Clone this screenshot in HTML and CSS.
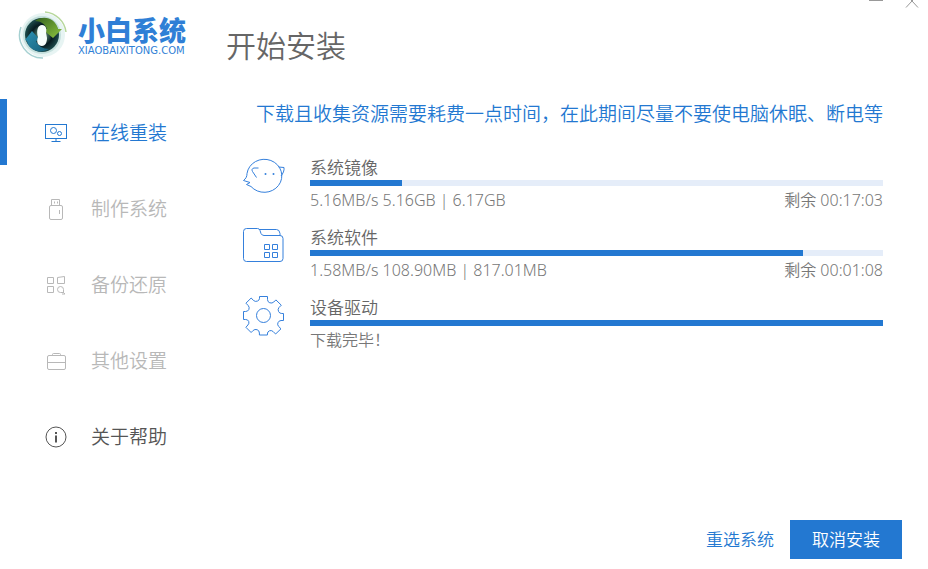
FILE: index.html
```html
<!DOCTYPE html>
<html lang="zh-CN">
<head>
<meta charset="utf-8">
<meta name="viewport" content="width=device-width, initial-scale=1">
<title>小白系统</title>
<link rel="stylesheet" href="styles.css">
</head>
<body>
<div class="window">
  <div class="window-controls">
    <button type="button" aria-label="最小化"><svg width="16" height="10" viewBox="0 0 16 10"><path d="M1 .5h14"/></svg></button>
    <button type="button" aria-label="关闭"><svg width="16" height="10" viewBox="0 0 16 10"><path d="M2 -5 8 1l6-6M2 7.5 8 1l6 6.5"/></svg></button>
  </div>
  <aside class="sidebar">
    <div class="brand">
      <svg class="brand-mark" width="50" height="50" viewBox="0 0 50 50" aria-hidden="true">
        <defs>
          <radialGradient id="disc"><stop offset="0" stop-color="#f4fffb"/><stop offset=".3" stop-color="#436b5c"/><stop offset=".6" stop-color="#061b20"/><stop offset="1" stop-color="#1d4b4c"/></radialGradient>
          <linearGradient id="leaf" x2="1" y2="1"><stop stop-color="#35631f"/><stop offset="1" stop-color="#8dc63f"/></linearGradient>
          <linearGradient id="sea" x2="1" y2="1"><stop stop-color="#2c92b4"/><stop offset="1" stop-color="#176079"/></linearGradient>
        </defs>
        <circle cx="25" cy="25" r="22" fill="#e7f4f3"/>
        <path d="M27 2A23 23 0 0 1 48 22" fill="none" stroke="#b6d79b" stroke-width="1.5"/>
        <path d="M3 17A23 23 0 0 0 25 48" fill="none" stroke="#a5d0d1" stroke-width="1.5"/>
        <circle cx="24" cy="25" r="19" fill="#c4dfdc"/>
        <circle cx="24" cy="25" r="17" fill="url(#disc)"/>
        <path d="M17 11C26 4 38 9 40 19l4 0-9 9-11-9 5 0c-2-5-6-8-12-8z" fill="url(#leaf)"/>
        <path d="M31 39C21 45 10 39 9 31l-2-1 7-9 8 9-4 1c2 5 7 8 13 8z" fill="url(#sea)"/>
        <path d="M24 15c4 0 5 4 4 8l1 5c0 5-2 8-5 8-4 0-6-4-4-9-2-7 0-12 4-12z" fill="#f7fffc"/>
      </svg>
      <div class="brand-text">
        <span class="brand-name">小白系统</span>
        <span class="brand-domain">XIAOBAIXITONG.COM</span>
      </div>
    </div>
    <nav class="menu">
      <a class="menu-item is-active" href="#reinstall" aria-current="page">
        <svg width="22" height="22" viewBox="0 0 22 22" aria-hidden="true"><rect x=".5" y="2.5" width="21" height="14"/><circle cx="8.500" cy="8.500" r="3"/><circle cx="14.500" cy="11.500" r="2"/><path d="M11 17v3M6.500 19.500h9"/></svg>
        <span>在线重装</span></a>
      <a class="menu-item is-muted" href="#create">
        <svg width="22" height="22" viewBox="0 0 22 22" aria-hidden="true"><path d="M6.500 7.500v-6h8v6M9.500 3.500v2M12.500 3.500v2"/><rect x="4.500" y="7.500" width="13" height="14" rx="1.500"/><path d="M14.500 12v4"/></svg>
        <span>制作系统</span></a>
      <a class="menu-item is-muted" href="#backup">
        <svg width="22" height="22" viewBox="0 0 22 22" aria-hidden="true"><path d="M2.500 3.500h6v6h-6zM12.500 3.500l7-1v7h-7zM2.500 12.500h6v6h-6zM18.500 18.500v-3a3 3 0 1 0-3 3zM18 18l2 2h-3"/></svg>
        <span>备份还原</span></a>
      <a class="menu-item is-muted" href="#settings">
        <svg width="22" height="22" viewBox="0 0 22 22" aria-hidden="true"><rect x="2.500" y="5.500" width="18" height="14" rx="1.500"/><path d="M7.500 5.500v-1q0-1 1-1h6q1 0 1 1v1M2.500 12.500h18"/></svg>
        <span>其他设置</span></a>
      <a class="menu-item" href="#help">
        <svg width="22" height="22" viewBox="0 0 22 22" aria-hidden="true"><circle cx="11" cy="11" r="10"/><path class="bold" d="M11 9.500v7M11 6v2"/></svg>
        <span>关于帮助</span></a>
    </nav>
  </aside>
  <main class="content">
    <h1>开始安装</h1>
    <p class="notice">下载且收集资源需要耗费一点时间，在此期间尽量不要使电脑休眠、断电等</p>
    <ul class="tasks">
      <li class="task">
        <svg width="44" height="44" viewBox="0 0 44 44" aria-hidden="true"><path d="M5 19.500A17.500 16.500 0 1 1 9 32.500L4.500 30.500L8 28.500L1.500 26.500C4 24.500 5 22.500 5 19.500zM36.500 13l5.500 .5c.5 3-1 6-3 8.500M14.500 23.500l-4-6c-1-2-.5-3 1.500-3.500l4.500 0"/><g class="dots"><circle cx="23.500" cy="20" r="1"/><circle cx="31.500" cy="20" r="1"/></g></svg>
        <div class="task-body">
          <h2>系统镜像</h2>
          <div class="track" role="progressbar" aria-label="系统镜像" aria-valuenow="16" aria-valuemin="0" aria-valuemax="100"><div class="fill" style="width:16%"></div></div>
          <div class="stats"><span>5.16MB/s 5.16GB | 6.17GB</span><span>剩余 00:17:03</span></div>
        </div>
      </li>
      <li class="task">
        <svg width="44" height="44" viewBox="0 0 44 44" aria-hidden="true"><path d="M4.500 4.500h11q2 0 2.500 2l1 3q1 2 3 2h16q3 0 3 3v20q0 3-3 3H4.500q-3 0-3-3v-27q0-3 3-3zM17.500 5.500h17q3 0 3.500 4v2M22.500 20.500h5v5h-5zM30.500 20.500h5v5h-5zM22.500 28.500h5v5h-5zM30.500 28.500h5v5h-5z"/></svg>
        <div class="task-body">
          <h2>系统软件</h2>
          <div class="track" role="progressbar" aria-label="系统软件" aria-valuenow="86" aria-valuemin="0" aria-valuemax="100"><div class="fill" style="width:86%"></div></div>
          <div class="stats"><span>1.58MB/s 108.90MB | 817.01MB</span><span>剩余 00:01:08</span></div>
        </div>
      </li>
      <li class="task">
        <svg width="44" height="44" viewBox="1 0 44 44" aria-hidden="true"><path d="M18.500 2.500h8v3q0 2.500 2.300 3.300t4-.8l2.100-2.100 5.400 5.300-2.300 2.300q-1.500 1.700-.5 3.900t3.300 2.100h1.700v7h-2.500q-2.300.2-3.100 2.300t.8 3.700l2.300 2.300-5.400 5.200-2.500-2.500q-1.700-1.500-3.700-.7t-2 3.200v1h-8v-2q0-2.500-2.300-3.300t-4 .8l-2 2-5.200-5.200 2-2.300q1.600-1.700.8-3.600T4.700 25.500H2.500v-8h2q2.500 0 3.400-2.100t-.8-4L4.900 9.200l5.300-5.200 2.200 2.400q1.800 1.600 4 .7t2.100-2.800z"/><circle cx="22.500" cy="21.500" r="7"/></svg>
        <div class="task-body">
          <h2>设备驱动</h2>
          <div class="track" role="progressbar" aria-label="设备驱动" aria-valuenow="100" aria-valuemin="0" aria-valuemax="100"><div class="fill" style="width:100%"></div></div>
          <div class="stats"><span>下载完毕！</span></div>
        </div>
      </li>
    </ul>
  </main>
  <footer class="actions">
    <a class="reselect" href="#reselect">重选系统</a>
    <button class="cancel" type="button">取消安装</button>
  </footer>
</div>
</body>
</html>
```

FILE: styles.css
```css
* {
  box-sizing: border-box;
}

body {
  margin: 0;
  background: #fff;
  color: #666;
  font-family: "Noto Sans", "Noto Sans CJK SC", sans-serif;
  font-weight: 350;
}

svg {
  display: block;
  flex: none;
}

.window {
  position: relative;
  display: grid;
  grid-template-columns: 226px 1fr;
  grid-template-rows: 1fr auto;
  min-height: 100vh;
}

.window-controls {
  position: absolute;
  top: 0;
  right: 8px;
  display: flex;
  gap: 20px;
}

.window-controls button {
  padding: 0;
  border: 0;
  background: none;
}

.window-controls svg {
  fill: none;
  stroke: #999;
}

.sidebar {
  grid-row: 1 / 3;
}

.brand {
  display: flex;
  align-items: flex-start;
  gap: 10px;
  height: 99px;
  padding: 10px 0 0 18px;
}

.brand-text {
  display: flex;
  flex-direction: column;
  padding-top: 6px;
  color: #2f7fd6;
}

.brand-name {
  font-size: 27px;
  font-weight: 900;
  line-height: 30px;
}

.brand-domain {
  font-family: "DejaVu Sans", sans-serif;
  font-size: 10px;
  font-weight: 400;
  line-height: 10px;
}

.menu {
  display: flex;
  flex-direction: column;
  gap: 10px;
}

.menu-item {
  display: flex;
  align-items: center;
  gap: 24px;
  height: 66px;
  padding: 2px 0 0 38px;
  border-left: 7px solid transparent;
  color: #555;
  font-size: 19px;
  line-height: 28px;
  text-decoration: none;
}

.menu-item svg,
.task svg {
  fill: none;
  stroke: currentColor;
}

.menu-item .bold {
  stroke-width: 2;
}

.menu-item.is-active {
  border-color: #2378d1;
  color: #2378d1;
}

.menu-item.is-muted {
  color: #b8b8b8;
}

.content {
  padding: 24px 45px 0 0;
}

h1 {
  margin: 0;
  font-size: 30px;
  font-weight: 350;
  line-height: 44px;
}

.notice {
  margin: 32px 0 0;
  color: #2378d1;
  font-size: 19px;
  line-height: 28px;
  text-align: right;
}

.tasks {
  display: flex;
  flex-direction: column;
  gap: 10px;
  margin: 0;
  padding: 26px 0 0 16px;
  list-style: none;
}

.task {
  display: flex;
  gap: 24px;
  min-height: 60px;
}

.task svg {
  color: #3580dc;
}

.task .dots {
  fill: currentColor;
  stroke: none;
}

.task-body {
  flex: 1;
}

h2 {
  margin: 0;
  padding-top: 2px;
  color: #666;
  font-size: 17px;
  font-weight: 350;
  line-height: 24px;
}

.track {
  height: 6px;
  background: #e5edf9;
}

.fill {
  height: 100%;
  background: #2378d1;
}

.stats {
  display: flex;
  justify-content: space-between;
  gap: 16px;
  color: #777;
  font-size: 16px;
  line-height: 28px;
}

.actions {
  display: flex;
  align-items: center;
  justify-content: flex-end;
  gap: 16px;
  padding: 0 26px 10px 0;
}

.reselect {
  color: #2378d1;
  font-size: 17px;
  line-height: 26px;
  text-decoration: none;
}

.cancel {
  padding: 6px 22px;
  border: 0;
  background: #2378d1;
  color: #fff;
  font-family: inherit;
  font-size: 17px;
  font-weight: 350;
  line-height: 27px;
}
```
